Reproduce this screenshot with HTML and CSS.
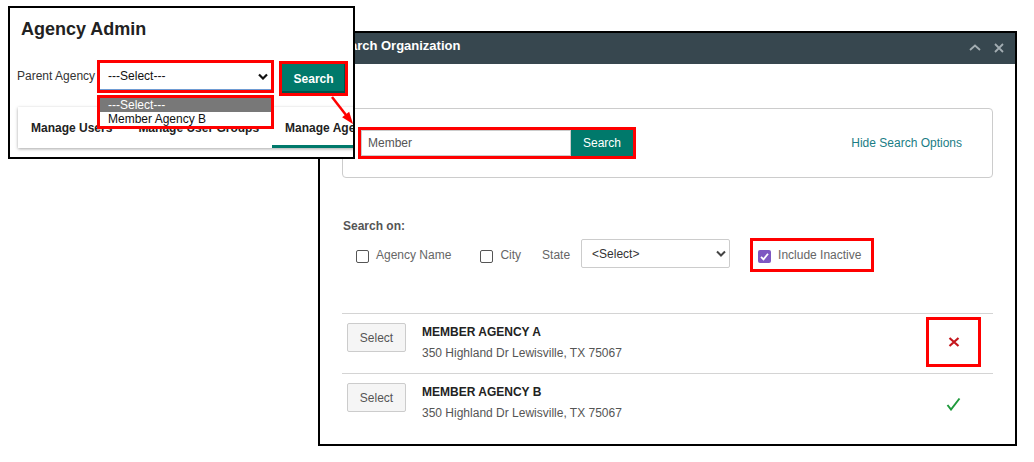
FILE: index.html
```html
<!DOCTYPE html>
<html>
<head>
<meta charset="utf-8">
<link rel="stylesheet" href="styles.css">
</head>
<body>
<div class="desk">
  <div class="win win-search">
    <div class="sw-head">
      <div class="sw-title">Search Organization</div>
      <svg class="hd-caret" width="12" height="7" viewBox="0 0 12 7"><path d="M1 6 L6 1.5 L11 6" fill="none" stroke="#a3adb2" stroke-width="1.8"/></svg>
      <svg class="hd-close" width="10" height="10" viewBox="0 0 10 10"><path d="M1 1 L9 9 M9 1 L1 9" fill="none" stroke="#a3adb2" stroke-width="1.8"/></svg>
    </div>
    <div class="sw-body">
      <div class="search-box">
        <div class="mark sb-mark">
          <div class="sb-input">Member</div>
          <button class="sb-btn">Search</button>
        </div>
        <span class="hide-link">Hide Search Options</span>
      </div>
      <div class="search-on">Search on:</div>
      <div class="opts">
        <span class="cb"></span><span class="opt-lbl">Agency Name</span>
        <span class="cb cb-city"></span><span class="opt-lbl">City</span>
        <span class="opt-lbl state-lbl">State</span>
        <div class="state-sel"><span>&lt;Select&gt;</span>
          <svg width="10" height="7" viewBox="0 0 10 7"><path d="M1 1.5 L5 5.5 L9 1.5" fill="none" stroke="#444" stroke-width="2"/></svg>
        </div>
        <div class="mark inact-mark">
          <span class="cb-on"><svg width="13" height="13" viewBox="0 0 13 13"><path d="M3 6.8 L5.5 9.3 L10 3.8" fill="none" stroke="#fff" stroke-width="1.8"/></svg></span>
          <span class="opt-lbl inact-lbl">Include Inactive</span>
        </div>
      </div>
      <div class="results">
        <div class="row">
          <button class="sel-btn">Select</button>
          <div class="info">
            <div class="name">MEMBER AGENCY A</div>
            <div class="addr">350 Highland Dr Lewisville, TX 75067</div>
          </div>
          <div class="status status-marked">
            <svg width="12" height="10" viewBox="0 0 12 10"><path d="M1.5 1 L10.5 9 M10.5 1 L1.5 9" fill="none" stroke="#c4161c" stroke-width="2.2"/></svg>
          </div>
        </div>
        <div class="row">
          <button class="sel-btn">Select</button>
          <div class="info">
            <div class="name">MEMBER AGENCY B</div>
            <div class="addr">350 Highland Dr Lewisville, TX 75067</div>
          </div>
          <div class="status">
            <svg class="ok" width="15" height="14" viewBox="0 0 15 14"><path d="M1.5 8 L5 12.5 L13.5 1.5" fill="none" stroke="#1f9a3c" stroke-width="2"/></svg>
          </div>
        </div>
      </div>
    </div>
  </div>

  <div class="win win-admin">
    <h1 class="admin-title">Agency Admin</h1>
    <div class="parent-row">
      <span class="lbl">Parent Agency</span>
      <div class="mark sel-mark">
        <div class="fake-select"><span>---Select---</span>
          <svg width="10" height="7" viewBox="0 0 10 7"><path d="M1 1.5 L5 5.5 L9 1.5" fill="none" stroke="#111" stroke-width="2.2"/></svg>
        </div>
      </div>
      <div class="mark btn-mark"><button class="adm-btn">Search</button></div>
    </div>
    <div class="tabs">
      <div class="tab">Manage Users</div>
      <div class="tab">Manage User Groups</div>
      <div class="tab active">Manage Agencies</div>
    </div>
    <div class="mark dropdown">
      <div class="dd-opt hl">---Select---</div>
      <div class="dd-opt">Member Agency B</div>
    </div>
  </div>

  <svg class="arrow" width="1034" height="462" viewBox="0 0 1034 462">
    <line x1="332" y1="97" x2="346" y2="115" stroke="#f00" stroke-width="2.5"/>
    <polygon points="353,124 342.1,117.3 349.2,111.7" fill="#f00"/>
  </svg>
</div>
</body>
</html>
```

FILE: styles.css
```css
html, body {
  margin: 0;
  background: #fff;
  font-family: "Liberation Sans", Arial, sans-serif;
}
button {
  font-family: inherit;
  cursor: default;
}
.desk {
  position: relative;
  width: 1034px;
  height: 462px;
  overflow: hidden;
}
.mark {
  border: 3px solid #f00;
}
.win {
  position: absolute;
  box-sizing: border-box;
  border: 2px solid #000;
  background: #fff;
}

/* ---------- Agency Admin window ---------- */
.win-admin {
  left: 8px;
  top: 6px;
  width: 347px;
  height: 153px;
  z-index: 2;
  overflow: hidden;
}
.admin-title {
  margin: 0;
  padding: 10px 0 0 11px;
  font-size: 18px;
  line-height: 22px;
  font-weight: bold;
  color: #222;
}
.parent-row {
  display: flex;
  align-items: flex-start;
  margin-top: 20px;
  padding-left: 7px;
}
.lbl {
  font-size: 12px;
  line-height: 14px;
  color: #333;
  margin-top: 9px;
  margin-right: 2px;
}
.sel-mark {
  width: 171px;
}
.fake-select {
  height: 26px;
  border-bottom: 1px solid #6e9bd3;
  background: #fff;
  display: flex;
  align-items: center;
  justify-content: space-between;
  padding: 0 3px 0 8px;
  font-size: 12px;
  color: #111;
}
.btn-mark {
  margin-left: 5px;
  margin-top: 1px;
}
.adm-btn {
  display: block;
  width: 63px;
  height: 29px;
  border: none;
  background: #00796b;
  color: #fff;
  font-size: 12px;
  font-weight: bold;
  box-shadow: inset -1px -2px 0 rgba(0, 0, 0, 0.3);
}
.tabs {
  display: flex;
  margin: 11px 0 0 8px;
  width: 420px;
  height: 41px;
  background: #fff;
  box-shadow: 0 1px 3px rgba(0, 0, 0, 0.35);
}
.tab {
  box-sizing: border-box;
  height: 41px;
  padding: 0 13px;
  display: flex;
  align-items: center;
  font-size: 12px;
  font-weight: bold;
  color: #222;
  white-space: nowrap;
}
.tab.active {
  border-bottom: 3px solid #00796b;
  padding-top: 3px;
}
.dropdown {
  position: absolute;
  left: 87px;
  top: 87px;
  width: 171px;
  background: #fff;
}
.dd-opt {
  height: 14px;
  line-height: 14px;
  font-size: 12px;
  padding-left: 8px;
  color: #111;
}
.dd-opt.hl {
  background: #787878;
  color: #fff;
}

/* ---------- Search Organization window ---------- */
.win-search {
  left: 318px;
  top: 31px;
  width: 699px;
  height: 415px;
  z-index: 1;
}
.sw-head {
  box-sizing: border-box;
  height: 31px;
  background: #37474f;
  display: flex;
  align-items: flex-start;
  padding: 4px 11px 0 14px;
}
.sw-title {
  flex: 1;
  color: #fff;
  font-size: 13px;
  line-height: 18px;
  font-weight: bold;
}
.hd-caret {
  margin-top: 7px;
}
.hd-close {
  margin-top: 6px;
  margin-left: 13px;
}
.sw-body {
  padding: 44px 22px 0;
}
.search-box {
  box-sizing: border-box;
  height: 70px;
  border: 1px solid #ccc;
  border-radius: 4px;
  display: flex;
  align-items: center;
  justify-content: space-between;
  padding: 0 30px 0 15px;
}
.sb-mark {
  display: flex;
}
.sb-input {
  box-sizing: border-box;
  width: 210px;
  height: 26px;
  border: 1px solid #ccc;
  padding-left: 6px;
  display: flex;
  align-items: center;
  font-size: 12px;
  color: #555;
}
.sb-btn {
  width: 62px;
  height: 26px;
  border: none;
  background: #00796b;
  color: #fff;
  font-size: 12px;
}
.hide-link {
  color: #1a7d85;
  font-size: 12px;
}
.search-on {
  margin: 41px 0 0 1px;
  font-size: 12px;
  line-height: 14px;
  font-weight: bold;
  color: #555;
}
.opts {
  display: flex;
  align-items: center;
  height: 34px;
  margin-top: 5px;
  padding-left: 14px;
}
.cb {
  box-sizing: border-box;
  width: 13px;
  height: 13px;
  border: 1px solid #555;
  border-radius: 2px;
  margin-top: 3px;
}
.cb-city {
  margin-left: 29px;
}
.opt-lbl {
  font-size: 12px;
  color: #666;
  margin-left: 7px;
}
.state-lbl {
  margin-left: 21px;
}
.state-sel {
  box-sizing: border-box;
  width: 149px;
  height: 29px;
  margin-left: 11px;
  margin-top: -3px;
  border: 1px solid #ccc;
  border-radius: 2px;
  display: flex;
  align-items: center;
  justify-content: space-between;
  padding: 0 3px 0 10px;
  font-size: 12px;
  color: #333;
}
.inact-mark {
  box-sizing: border-box;
  height: 34px;
  margin-left: 20px;
  padding: 0 10px 0 5px;
  display: flex;
  align-items: center;
}
.cb-on {
  width: 13px;
  height: 13px;
  border-radius: 2px;
  background: #7e57c2;
  margin-top: 3px;
  display: flex;
}
.results {
  margin-top: 41px;
}
.row {
  box-sizing: border-box;
  height: 60px;
  border-top: 1px solid #d4d4d4;
  display: flex;
  align-items: flex-start;
  padding: 0 12px 0 5px;
}
.sel-btn {
  margin-top: 9px;
  width: 59px;
  height: 29px;
  border: 1px solid #ccc;
  border-radius: 2px;
  background: #f5f5f5;
  color: #555;
  font-size: 12px;
}
.info {
  flex: 1;
  margin-left: 16px;
  padding-top: 11px;
}
.name {
  font-size: 12px;
  line-height: 14px;
  font-weight: bold;
  color: #222;
}
.addr {
  margin-top: 7px;
  font-size: 12px;
  line-height: 14px;
  color: #555;
}
.status {
  box-sizing: border-box;
  width: 55px;
  height: 50px;
  margin-top: 3px;
  border: 3px solid transparent;
  display: flex;
  align-items: center;
  justify-content: center;
}
.status-marked {
  border-color: #f00;
}
.ok {
  margin-top: 3px;
}
.arrow {
  position: absolute;
  left: 0;
  top: 0;
  z-index: 3;
  pointer-events: none;
}
```
